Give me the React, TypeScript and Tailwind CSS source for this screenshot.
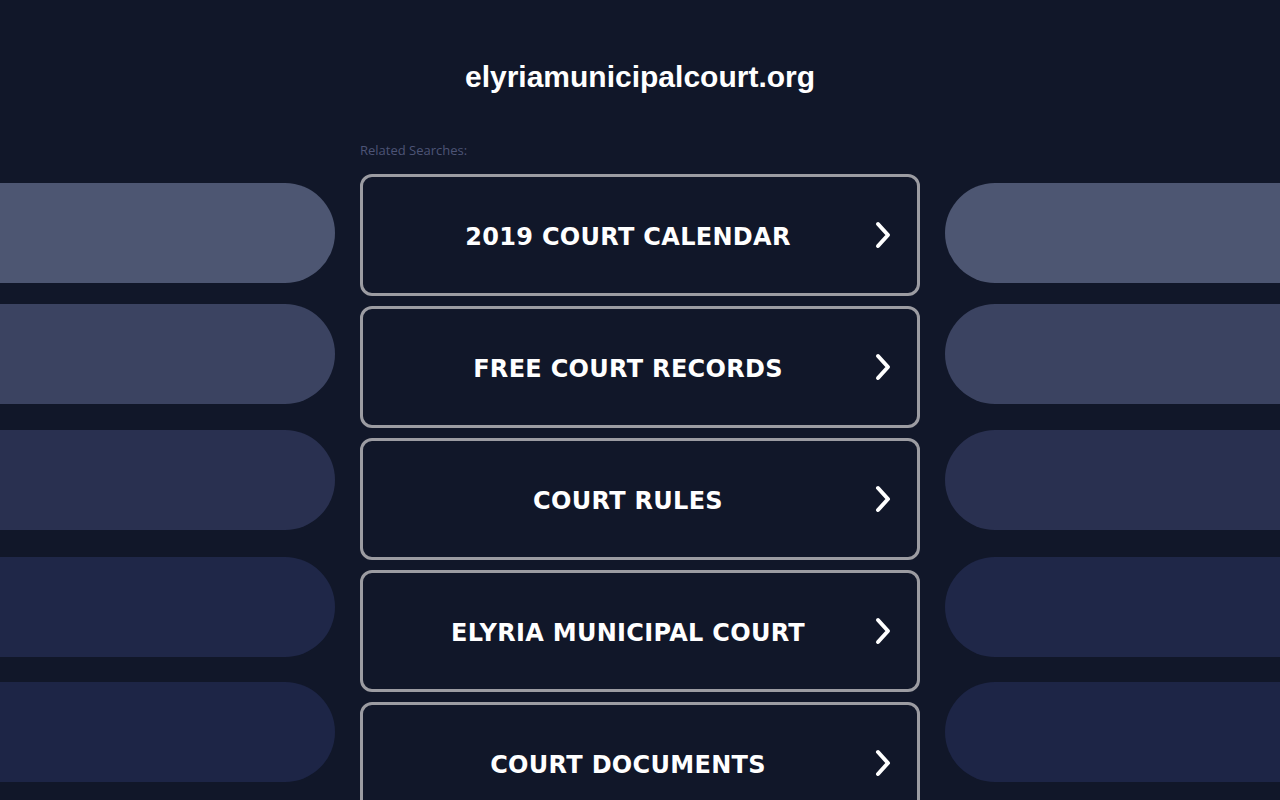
const searches = [
  '2019 COURT CALENDAR',
  'FREE COURT RECORDS',
  'COURT RULES',
  'ELYRIA MUNICIPAL COURT',
  'COURT DOCUMENTS',
]

function Pills({ side }: { side: 'left' | 'right' }) {
  const round = side === 'left' ? 'rounded-r-[50px]' : 'rounded-l-[50px]'
  return (
    <div className="flex flex-col pt-[43px]">
      <div className={`h-[100px] bg-[#4d5672] ${round}`} />
      <div className={`mt-[21px] h-[100px] bg-[#3b4361] ${round}`} />
      <div className={`mt-[26px] h-[100px] bg-[#293050] ${round}`} />
      <div className={`mt-[27px] h-[100px] bg-[#1f2748] ${round}`} />
      <div className={`mt-[25px] h-[100px] bg-[#1d2546] ${round}`} />
    </div>
  )
}

function Chevron() {
  return (
    <svg width="20" height="30" viewBox="0 0 20 30" className="absolute right-[24px] top-1/2 -translate-y-1/2">
      <polyline
        points="5,4 15,15 5,26"
        fill="none"
        stroke="white"
        strokeWidth="4"
        strokeLinecap="round"
        strokeLinejoin="round"
      />
    </svg>
  )
}

export default function App() {
  return (
    <div className="min-h-[800px] h-[800px] overflow-hidden bg-[#111729]">
      <div className="flex h-[140px] justify-center pt-[58px]">
        <h1 className="font-['Liberation_Sans',Arial,sans-serif] text-[30px] font-bold leading-[38px] text-white">
          elyriamunicipalcourt.org
        </h1>
      </div>

      <div className="grid grid-cols-[1fr_560px_1fr] gap-[25px]">
        <Pills side="left" />

        <div className="flex flex-col">
          <div className="h-[34px] pt-[2px] font-['Open_Sans',sans-serif] text-[13px] leading-[17px] text-[#4d5476]">
            Related Searches:
          </div>
          <div className="flex flex-col gap-[10px]">
            {searches.map((s) => (
              <a
                key={s}
                href="#"
                className="relative flex h-[122px] items-center justify-center rounded-[12px] border-[3px] border-[#9c9ca2] pl-[20px] pr-[44px] pt-[3px]"
              >
                <span className="font-['DejaVu_Sans',Verdana,sans-serif] text-[24px] font-bold tracking-[0.3px] text-white">
                  {s}
                </span>
                <Chevron />
              </a>
            ))}
          </div>
        </div>

        <Pills side="right" />
      </div>
    </div>
  )
}
